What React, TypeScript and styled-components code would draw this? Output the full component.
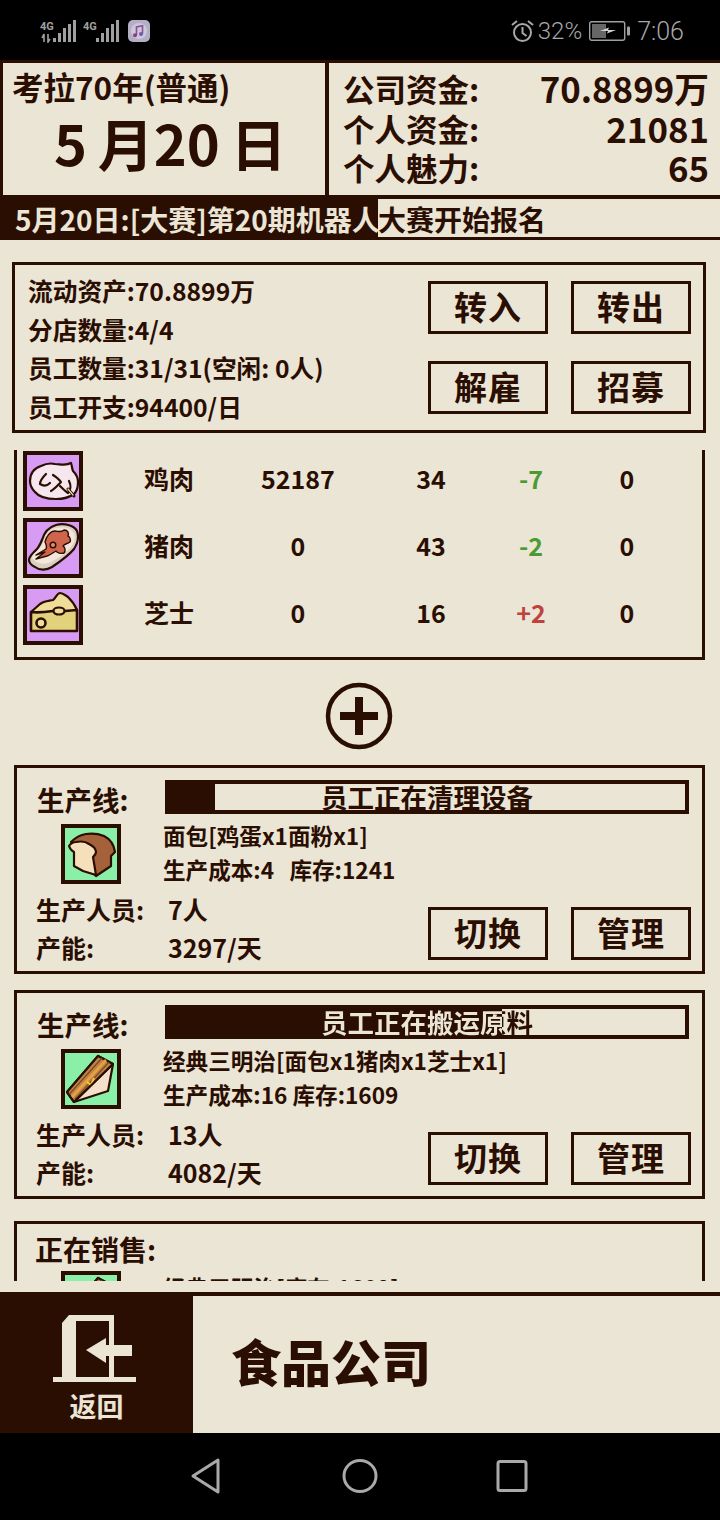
import React from "react";
import styled, { createGlobalStyle } from "styled-components";

const INK = "#2a0e02";
const PAPER = "#ebe5d5";
const CJK = `"Noto Sans CJK SC", "Noto Sans", sans-serif`;

const Global = createGlobalStyle`
  html, body { margin: 0; padding: 0; background: #000; }
  * { box-sizing: border-box; }
`;

const Screen = styled.div`
  width: 720px; height: 1520px; overflow: hidden; background: ${PAPER};
  color: ${INK}; font-family: ${CJK}; font-weight: 700;
  display: flex; flex-direction: column;
`;

const StatusBar = styled.div`
  height: 60px; background: #000; color: #a8a8a8; flex: none;
  display: flex; align-items: center; justify-content: space-between;
  padding: 2px 36px 0 40px;
`;
const StatusGroup = styled.div`display: flex; align-items: center;`;
const SignalGap = styled.span`width: 6px;`;
const StatusText = styled.span<{ $size: number; $ml: number }>`
  font-family: "Roboto", sans-serif; font-weight: 300; font-size: ${p => p.$size}px;
  margin-left: ${p => p.$ml}px; line-height: 1;
`;
const MusicSvg = styled.svg`margin-left: 8px;`;
const BatterySvg = styled.svg`margin-left: 7px;`;

const Header = styled.div`
  flex: none; height: 136px; background: ${INK}; padding: 3px 0 1px 3px;
  display: flex; gap: 4px;
`;
const DateBox = styled.div`
  width: 322px; background: ${PAPER}; padding: 1px 0 0 9px;
`;
const EraText = styled.div`font-size: 31.5px; line-height: 44px; font-weight: 700;`;
const DateText = styled.div`
  font-size: 56px; line-height: 70px; font-weight: 700; margin: -1px 0 0 42px; white-space: pre; word-spacing: -2px;
`;
const FundsBox = styled.div`
  flex: 1; background: ${PAPER}; padding: 6px 11px 0 14px;
`;
const FundRow = styled.div`
  display: flex; justify-content: space-between; align-items: center; height: 39.5px;
`;
const FundLabel = styled.span`font-size: 31.5px; line-height: 39px;`;
const FundValue = styled.span`font-size: 34.8px; line-height: 39px;`;

const Ticker = styled.div`
  flex: none; height: 44px; background: ${INK}; padding: 3px 0; display: flex;
  font-size: 28px; line-height: 41px;
`;
const TickerDone = styled.div`
  width: 378px; color: ${PAPER}; padding-left: 15px; white-space: nowrap; flex: none;
`;
const TickerRest = styled.div`flex: 1; background: ${PAPER}; white-space: nowrap; height: 38px;`;

const Summary = styled.div`
  flex: none; margin: 22px 14px 0 12px; height: 171px; border: 3px solid ${INK};
  display: flex; justify-content: space-between; padding: 6px 12px 0 13px;
`;
const SummaryLines = styled.div`display: flex; flex-direction: column;`;
const SummaryLine = styled.div`font-size: 24.7px; line-height: 38.5px; white-space: nowrap;`;
const ButtonGrid = styled.div`
  display: grid; grid-template-columns: 120px 120px; column-gap: 23px; row-gap: 27px;
  margin-top: 10px; align-content: start;
`;
const Btn = styled.div`
  height: 53px; border: 3.5px solid ${INK}; font-size: 33px; line-height: 44px;
  text-align: center; letter-spacing: 1px;
`;

const Scroller = styled.div`
  flex: none; margin-top: 17px; height: 831px; overflow: hidden; padding: 0 15px 0 14px;
`;
const Stock = styled.div`
  border: 3px solid ${INK}; border-top: 0; height: 210px; padding: 1px 0 0 6px;
  display: flex; flex-direction: column; gap: 7px;
`;
const StockRow = styled.div`
  display: grid; grid-template-columns: 80px 92px 126px 100px 60px 92px; column-gap: 20px;
  align-items: center; height: 60px; font-size: 25px; font-weight: 700; text-align: center;
`;
const StockCell = styled.span`margin-bottom: 6px;`;
const Delta = styled(StockCell)<{ $up: boolean }>`color: ${p => (p.$up ? "#c0423c" : "#4b9a32")};`;
const Thumb = styled.div<{ $bg: string }>`
  width: 60px; height: 60px; border: 4px solid ${INK}; background: ${p => p.$bg};
  display: flex;
`;
const AddWrap = styled.div`display: flex; justify-content: center; padding: 22px 2px 15px 0;`;

const Card = styled.div`
  border: 3px solid ${INK}; height: 209px; margin-bottom: 16px; padding: 12px 13px 0 0;
`;
const CardTop = styled.div`display: flex; align-items: center; height: 34px;`;
const CardTitle = styled.div`font-size: 27.5px; width: 148px; padding-left: 20px; line-height: 34px; white-space: nowrap; margin-top: 4px;`;
const Progress = styled.div`
  flex: 1; height: 34px; border: 4px solid ${INK}; position: relative; font-size: 26.5px;
  line-height: 25px; text-align: center;
`;
const ProgressFill = styled.div`position: absolute; left: 0; top: 0; bottom: 0; background: ${INK};`;
const ProgressLabel = styled.span`position: relative;`;
const CardMiddle = styled.div`display: flex; margin-top: 10px; height: 60px;`;
const ThumbCell = styled.div`width: 146px; padding-left: 44px; flex: none;`;
const Recipe = styled.div`margin-top: -5px;`;
const RecipeLine = styled.div`font-size: 22.6px; line-height: 34px; white-space: pre;`;
const CardBottom = styled.div`display: flex; justify-content: space-between; margin-top: 6px;`;
const Stats = styled.div`
  display: grid; grid-template-columns: 132px auto; padding-left: 19px; align-content: start;
  font-size: 25px; line-height: 38px; white-space: nowrap;
`;
const CardButtons = styled.div`
  display: grid; grid-template-columns: 120px 120px; column-gap: 23px; margin-top: 17px; margin-right: -2px; align-content: start;
`;
const SaleCard = styled(Card)`padding: 7px 0 0 18px; margin-top: 22px;`;
const SaleTitle = styled.div`font-size: 28px; line-height: 36px;`;
const SaleRow = styled.div`display: flex; margin-top: 4px;`;
const SaleThumb = styled.div`width: 128px; padding-left: 26px; flex: none;`;

const BottomBar = styled.div`
  flex: none; margin-top: 11px; height: 141px; border-top: 4px solid ${INK}; display: flex;
`;
const BackBtn = styled.div`
  width: 193px; background: ${INK}; color: ${PAPER}; display: flex; flex-direction: column; align-items: center;
  padding-top: 19px; font-size: 27px; line-height: 36px;
`;
const BackLabel = styled.div`margin-top: 5px;`;
const DoorSvg = styled.svg`margin-right: 4px; flex: none;`;
const PageTitle = styled.div`font-size: 50px; font-weight: 900; padding: 34px 0 0 38px; line-height: 60px;`;

const NavBar = styled.div`
  flex: 1; background: #000; display: flex; align-items: center; justify-content: center; padding-bottom: 1px;
`;

const Signal = ({ arrows }: { arrows?: boolean }) => (
  <svg width="37" height="24" viewBox="0 0 37 24">
    <text x="0" y="11" fontFamily="Roboto, sans-serif" fontWeight="700" fontSize="11" fill="#a0a0a0">4G</text>
    {arrows && <path d="M2 19l2-4v8M8 15v8l2-3" stroke="#a0a0a0" strokeWidth="1.6" fill="none" />}
    <g fill="#a0a0a0">
      <rect x="13" y="19" width="3" height="4" />
      <rect x="18" y="14" width="3" height="9" />
      <rect x="23" y="9" width="3" height="14" />
      <rect x="28" y="5" width="3" height="18" />
      <rect x="33" y="1" width="3" height="22" />
    </g>
  </svg>
);
const MusicIcon = () => (
  <MusicSvg width="22" height="22" viewBox="0 0 22 22">
    <rect width="22" height="22" rx="5" fill="#b4afc4" />
    <circle cx="11" cy="11" r="8" fill="#cfc8d8" />
    <path d="M8.5 15V7l6-1.3v8" stroke="#8a4f9e" strokeWidth="1.6" fill="none" />
    <circle cx="7" cy="15.3" r="2" fill="#8a3f7e" /><circle cx="13" cy="14" r="2" fill="#6a5fb0" />
  </MusicSvg>
);
const Alarm = () => (
  <svg width="24" height="24" viewBox="0 0 24 24" fill="none" stroke="#a8a8a8" strokeWidth="2">
    <circle cx="12.5" cy="13.5" r="8.5" /><path d="M12.5 8v6l4 3M2 6l5-4M23 6l-5-4" />
  </svg>
);
const Battery = () => (
  <BatterySvg width="42" height="20" viewBox="0 0 42 20">
    <rect x=".7" y=".7" width="35" height="18.6" rx="2" fill="none" stroke="#a0a0a0" strokeWidth="1.4" />
    <rect x="3" y="3" width="14" height="14" fill="#666" />
    <path d="M11 10l9-3.500-1 2.500h8l-9 3.500 1-2.500z" fill="#d0d0d0" />
    <rect x="38" y="5.5" width="3" height="9" rx="1" fill="#a0a0a0" />
  </BatterySvg>
);

const Line = { stroke: INK, strokeWidth: 2.2, strokeLinejoin: "round" as const, strokeLinecap: "round" as const };

const Chicken = () => (
  <svg width="52" height="52" viewBox="0 0 52 52">
    <path d="M3 26C3 18 8 13 14 11c4-2 10-3 14-2 5 0 11 2 16-1 1 3 1 6 2 8 3 3 5 7 5 11 0 5-1 9-4 12-4 3-10 5-18 5-9 0-17-2-21-7-3-3-5-7-5-11z" fill="#f6e7ef" {...Line} />
    <path d="M19 19c-3 3-6 6-6 10 3 2 7 2 10-1" fill="none" {...Line} />
    <path d="M26 20c3 2 6 4 8 7-3 3-6 7-10 9" fill="none" {...Line} />
    <path d="M33 31c3 3 5 5 8 7 3-3 3-8 1-12" fill="none" {...Line} />
    <path d="M41 34l6 7" stroke={INK} strokeWidth="3" strokeLinecap="round" />
    <path d="M41 34l5 6" stroke="#e8dca0" strokeWidth="1.2" strokeLinecap="round" />
  </svg>
);
const Steak = () => (
  <svg width="52" height="52" viewBox="0 0 52 52">
    <path d="M2 38c0-3 2-5 5-8 4-3 6-7 8-12 2-7 7-13 14-15 8-2 18 0 21 6 2 6 1 12-3 18-5 6-13 12-22 18-5 3-12 4-17 0-4-2-6-4-6-7z" fill="#d9d0c2" {...Line} />
    <path d="M5 36c0-3 3-5 6-8 3-3 5-7 6-10 2-6 6-11 12-12 7-2 15 0 18 5 2 5 0 10-3 14-5 6-12 11-20 15-7 3-15 2-19-4z" fill="#f4e6da" />
    <path d="M18 20c1-5 5-11 10-11 3 0 6 2 9-1 4 0 5 3 4 6 2 1 3 4 2 6-3 2-6 2-7 4 2 1 3 5 1 7-3 1-7 0-8-2-3 2-6 4-9 5l-11 3 9-7-9 3 10-6c1-2 0-5-1-7z" fill="#d0654c" stroke={INK} strokeWidth="1.4" strokeLinejoin="round" />
    <circle cx="26" cy="23" r="2.8" fill="#dc8a6e" stroke={INK} strokeWidth="1.4" />
  </svg>
);
const Cheese = () => (
  <svg width="52" height="52" viewBox="0 0 52 52">
    <path d="M4 23l9-8c4-3 9-3 13-4 3-2 4-7 7-7 3 0 5 2 8 4 3 3 7 8 9 13v20H4z" fill="#efdd98" {...Line} />
    <path d="M4 23h22l6 0h18v20H4z" fill="#e2d27c" />
    <path d="M4 23c8 1 15 0 22-1M38 22l12-1M4 23v19h46V21M4 42z" fill="none" {...Line} strokeWidth={2.6} />
    <ellipse cx="32" cy="22" rx="5.5" ry="3.5" fill="#efdd98" {...Line} />
    <circle cx="14" cy="34" r="4.5" fill="#efdd98" {...Line} strokeWidth={2.6} />
  </svg>
);
const Bread = () => (
  <svg width="52" height="52" viewBox="0 0 52 52">
    <path d="M6 14C11 9 15 7 21 6c7-1 13 0 18 2 6 3 10 9 11 16l-4 4v10L31 48l-5-5z" fill="#a5613a" {...Line} />
    <path d="M4 18c2-3 4-4 7-4 5-1 9-1 13 2 4 2 7 5 7 8 0 2-2 4-3 5l3 18-13-4-9-5V24c-2-1-4-3-5-6z" fill="#f6e0bc" {...Line} />
  </svg>
);
const Sandwich = () => (
  <svg width="52" height="52" viewBox="0 0 52 52">
    <path d="M2 39L33 3l15 8-5 27L9 49z" fill="#f3dfca" {...Line} />
    <path d="M2 39L33 3l15 8L9 49z" fill="#bd8447" {...Line} />
    <path d="M7 44L41 7" stroke="#e8a040" strokeWidth="2.6" />
    <path d="M4.500 41L37 5" stroke="#7a4a22" strokeWidth="1.2" />
    <path d="M10 46L44 9" stroke="#7a4a22" strokeWidth="1.2" />
    <path d="M22 29l4 3 3-7" stroke="#f4c83c" strokeWidth="2" fill="none" />
    <path d="M9 49L48 11" stroke={INK} strokeWidth="2" />
  </svg>
);

const Plus = () => (
  <svg width="68" height="68" viewBox="0 0 68 68">
    <circle cx="34" cy="34" r="31" fill="none" stroke={INK} strokeWidth="4.5" />
    <path d="M34 15v38M15 34h38" stroke={INK} strokeWidth="8" />
  </svg>
);

const DoorIcon = () => (
  <DoorSvg width="84" height="68" viewBox="0 0 84 68">
    <path fill={PAPER} fillRule="evenodd" d="M0 62h9V8l7-8h45v62h22v5H0zM23 62h33V6H23z" />
    <path fill={PAPER} d="M33 35l20-12v7h26v11H53v7z" />
  </DoorSvg>
);

const NavIcons = () => (
  <svg width="720" height="86" viewBox="0 0 720 86" fill="none" stroke="#a9a9a9" strokeWidth="3" strokeLinejoin="round">
    <path d="M218 27v32L193 43z" />
    <ellipse cx="360" cy="43" rx="16" ry="15.5" />
    <rect x="498" y="28.5" width="28" height="29" rx="2" />
  </svg>
);

const stock = [
  { icon: <Chicken />, name: "鸡肉", count: "52187", price: "34", delta: "-7", held: "0" },
  { icon: <Steak />, name: "猪肉", count: "0", price: "43", delta: "-2", held: "0" },
  { icon: <Cheese />, name: "芝士", count: "0", price: "16", delta: "+2", held: "0" },
];

const lines = [
  { icon: <Bread />, pct: 9, status: "员工正在清理设备", recipe: "面包[鸡蛋x1面粉x1]", cost: "生产成本:4   库存:1241", staff: "7人", cap: "3297/天" },
  { icon: <Sandwich />, pct: 64.5, status: "员工正在搬运原料", recipe: "经典三明治[面包x1猪肉x1芝士x1]", cost: "生产成本:16 库存:1609", staff: "13人", cap: "4082/天" },
];

const splitLabel = (pct: number): React.CSSProperties | undefined => {
  const split = (pct * 5.17 - 152) / 2.12;
  if (split <= 0) return undefined;
  return {
    background: `linear-gradient(90deg, ${PAPER} 0 ${split}%, ${INK} 0)`,
    WebkitBackgroundClip: "text",
    backgroundClip: "text",
    color: "transparent",
  };
};

export default function App() {
  return (
    <Screen>
      <Global />
      <StatusBar>
        <StatusGroup>
          <Signal arrows />
          <SignalGap />
          <Signal />
          <MusicIcon />
        </StatusGroup>
        <StatusGroup>
          <Alarm />
          <StatusText $size={24} $ml={4}>32%</StatusText>
          <Battery />
          <StatusText $size={25} $ml={6}>7:06</StatusText>
        </StatusGroup>
      </StatusBar>

      <Header>
        <DateBox>
          <EraText>考拉70年(普通)</EraText>
          <DateText>5 月20 日</DateText>
        </DateBox>
        <FundsBox>
          <FundRow><FundLabel>公司资金:</FundLabel><FundValue>70.8899万</FundValue></FundRow>
          <FundRow><FundLabel>个人资金:</FundLabel><FundValue>21081</FundValue></FundRow>
          <FundRow><FundLabel>个人魅力:</FundLabel><FundValue>65</FundValue></FundRow>
        </FundsBox>
      </Header>

      <Ticker>
        <TickerDone>5月20日:[大赛]第20期机器人</TickerDone>
        <TickerRest>大赛开始报名</TickerRest>
      </Ticker>

      <Summary>
        <SummaryLines>
          <SummaryLine>流动资产:70.8899万</SummaryLine>
          <SummaryLine>分店数量:4/4</SummaryLine>
          <SummaryLine>员工数量:31/31(空闲: 0人)</SummaryLine>
          <SummaryLine>员工开支:94400/日</SummaryLine>
        </SummaryLines>
        <ButtonGrid>
          <Btn>转入</Btn><Btn>转出</Btn><Btn>解雇</Btn><Btn>招募</Btn>
        </ButtonGrid>
      </Summary>

      <Scroller>
        <Stock>
          {stock.map(s => (
            <StockRow key={s.name}>
              <Thumb $bg="#d79bf3">{s.icon}</Thumb>
              <StockCell>{s.name}</StockCell>
              <StockCell>{s.count}</StockCell>
              <StockCell>{s.price}</StockCell>
              <Delta $up={s.delta.startsWith("+")}>{s.delta}</Delta>
              <StockCell>{s.held}</StockCell>
            </StockRow>
          ))}
        </Stock>
        <AddWrap><Plus /></AddWrap>
        {lines.map(l => (
          <Card key={l.status}>
            <CardTop>
              <CardTitle>生产线:</CardTitle>
              <Progress>
                <ProgressFill style={{ width: `${l.pct}%` }} />
                <ProgressLabel style={splitLabel(l.pct)}>{l.status}</ProgressLabel>
              </Progress>
            </CardTop>
            <CardMiddle>
              <ThumbCell><Thumb $bg="#8af0a8">{l.icon}</Thumb></ThumbCell>
              <Recipe>
                <RecipeLine>{l.recipe}</RecipeLine>
                <RecipeLine>{l.cost}</RecipeLine>
              </Recipe>
            </CardMiddle>
            <CardBottom>
              <Stats>
                <span>生产人员:</span><span>{l.staff}</span>
                <span>产能:</span><span>{l.cap}</span>
              </Stats>
              <CardButtons><Btn>切换</Btn><Btn>管理</Btn></CardButtons>
            </CardBottom>
          </Card>
        ))}
        <SaleCard>
          <SaleTitle>正在销售:</SaleTitle>
          <SaleRow>
            <SaleThumb><Thumb $bg="#8af0a8"><Sandwich /></Thumb></SaleThumb>
            <RecipeLine>经典三明治[库存:1609]</RecipeLine>
          </SaleRow>
        </SaleCard>
      </Scroller>

      <BottomBar>
        <BackBtn>
          <DoorIcon />
          <BackLabel>返回</BackLabel>
        </BackBtn>
        <PageTitle>食品公司</PageTitle>
      </BottomBar>

      <NavBar><NavIcons /></NavBar>
    </Screen>
  );
}
